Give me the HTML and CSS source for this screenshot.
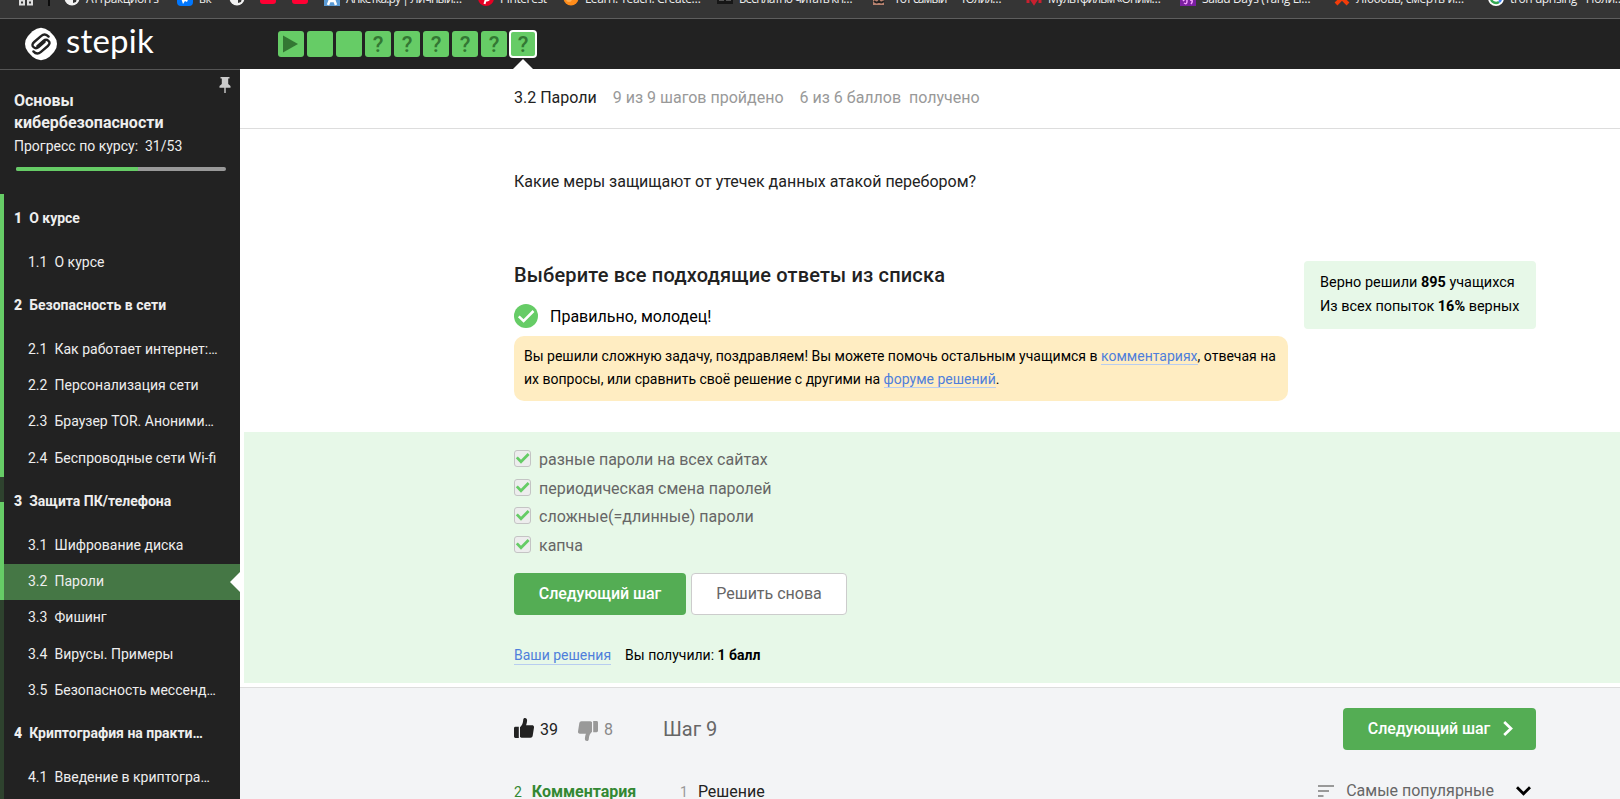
FILE: index.html
```html
<!DOCTYPE html>
<html lang="ru">
<head>
<meta charset="utf-8">
<title>Пароли — Stepik</title>
<link rel="stylesheet" href="styles.css">
</head>
<body>
<svg class="defs" aria-hidden="true">
  <symbol id="check" viewBox="0 0 17 17"><path d="M2.800 7.400 7 11.800 14.600 4" fill="none" stroke="#66cc66" stroke-width="2.800"/></symbol>
  <symbol id="globe" viewBox="0 0 16 16"><circle cx="8" cy="8" r="7.5" fill="#f2f2f2"/><path d="M4 3l4 1 1 4-3 2-1-2-3-1zM9 10l4-2-1 4-3 1z" fill="#333"/></symbol>
  <symbol id="thumb" viewBox="0 0 20 20"><path d="M0 10.2Q0 8.8 1.4 8.8H4.8V20H1.4Q0 20 0 18.6ZM6 9.3C8 7.5 9 5.2 9.2 2 9.3.6 10 0 11 0c1.400 0 2.100 1 2.100 2.300 0 1.800-.5 3.400-1 4.900H18.200c1.200 0 2 1 1.800 2.200L18.700 17.800c-.2 1.300-1 2-2.200 2H7.500L6 19Z"/></symbol>
</svg>

<div class="bookmarks">
  <span class="mark mark-apps"><svg class="fav" viewBox="0 0 16 16"><path d="M2 3h4v4H2zM10 3h4v4h-4zM2 10.500h4v4H2zM10 10.500h4v4h-4z" fill="none" stroke="#ddd" stroke-width="2"/></svg></span>
  <span class="mark-divider"></span>
  <span class="mark w112"><svg class="fav"><use href="#globe"/></svg><span>Аттракцион's</span></span>
  <span class="mark w52"><svg class="fav" viewBox="0 0 16 16"><rect width="16" height="16" rx="4" fill="#07f"/><path d="M3 5l5 3 5-3-3 7-2-1-2 3z" fill="#fff"/></svg><span>вк</span></span>
  <span class="mark w31"><svg class="fav"><use href="#globe"/></svg></span>
  <span class="mark w32"><svg class="fav" viewBox="0 0 16 16"><rect width="16" height="14" rx="3" fill="#ff0033"/></svg></span>
  <span class="mark w32"><svg class="fav" viewBox="0 0 16 16"><rect width="16" height="14" rx="3" fill="#ff0033"/></svg></span>
  <span class="mark w154 tight"><svg class="fav" viewBox="0 0 16 16"><rect width="16" height="16" fill="#5b9bd5"/><path d="M4 15 8 4l4 11M5 11h6" fill="none" stroke="#fff" stroke-width="2.500"/></svg><span>Анкетка.ру | Личный…</span></span>
  <span class="mark w85"><svg class="fav" viewBox="0 0 16 16"><circle cx="8" cy="8" r="8" fill="#e60023"/><path d="M6.500 14 9 5" stroke="#fff" stroke-width="2"/><path d="M7.500 10.500q4 1 4-3" fill="none" stroke="#fff" stroke-width="1.500"/></svg><span>Pinterest</span></span>
  <span class="mark w154"><svg class="fav" viewBox="0 0 16 16"><circle cx="8" cy="8" r="7.500" fill="#ff8c1a"/><circle cx="6" cy="9" r="3" fill="#ffb055"/></svg><span>Learn. Teach. Create…</span></span>
  <span class="mark w155 tight"><svg class="fav" viewBox="0 0 16 16"><rect width="16" height="14" fill="#161616"/><path d="M2 10h5M9 10h5" stroke="#555" stroke-width="2"/></svg><span>Бесплатно читать кн…</span></span>
  <span class="mark w154 tight"><svg class="fav" viewBox="0 0 16 16"><rect x="1" width="11" height="15" fill="#b98370"/><path d="M2 11q3 3 5 0 2 3 5 0" fill="none" stroke="#222" stroke-width="2"/></svg><span>Тот самый — Юлия…</span></span>
  <span class="mark w154 tight"><svg class="fav" viewBox="0 0 16 16"><path d="M2 13V4l6 9 6-9v9" fill="none" stroke="#c8202f" stroke-width="3"/></svg><span>Мультфильм «Оним…</span></span>
  <span class="mark w154"><svg class="fav" viewBox="0 0 16 16"><rect width="16" height="16" fill="#7b1fa2"/><path d="M3 11q4-4 4 0t-3 2M10 10q4 0 1 4" fill="none" stroke="#f6a0ff" stroke-width="1.500"/></svg><span>Salad Days (Tang Li…</span></span>
  <span class="mark w154"><svg class="fav" viewBox="0 0 16 16"><path d="M2 2 14 14M14 2 2 14" stroke="#f23c0a" stroke-width="4"/></svg><span>Любовь, смерть и…</span></span>
  <span class="mark w154"><svg class="fav" viewBox="0 0 16 16"><circle cx="8" cy="8" r="8" fill="#fff"/><path d="M3 8a5 5 0 0 0 8 4" fill="none" stroke="#34a853" stroke-width="2.500"/><path d="M11 12a5 5 0 0 0 2-4H8" fill="none" stroke="#4285f4" stroke-width="2.500"/></svg><span>tron uprising - Поли…</span></span>
</div>

<header class="topbar">
  <a class="brand">
    <svg class="brand-mark" viewBox="0 0 34 34"><path d="M8.500 4.200Q17-2.800 25.500 4.200L30 9q3 3.500 3 8t-3 8l-4.500 4.800q-8.500 7-17 0L4 25q-3-3.500-3-8t3-8Z" fill="#fff"/><path d="M24.600 9.600Q21 5.600 17 9.200L10.200 15q-3.200 3-.6 5.200 2.400 2 5-.200l6-5.200" fill="none" stroke="#222" stroke-width="2.400" stroke-linecap="round"/><path d="M9.400 24.400q3.600 4 7.600 .4l6.800-5.800q3.200-3 .6-5.200-2.400-2-5 .200l-6 5.200" fill="none" stroke="#222" stroke-width="2.400" stroke-linecap="round"/></svg>
    <span class="brand-name">stepik</span>
  </a>
  <nav class="steps">
    <a class="step"><svg class="play" viewBox="0 0 16 18"><path d="M0 0 16 9 0 18Z" fill="#337733"/></svg></a>
    <a class="step"></a>
    <a class="step"></a>
    <a class="step">?</a>
    <a class="step">?</a>
    <a class="step">?</a>
    <a class="step">?</a>
    <a class="step">?</a>
    <a class="step step-current">?</a>
  </nav>
</header>

<div class="layout">
  <aside class="sidebar">
    <div class="course">
      <svg class="pin" viewBox="0 0 12 17"><path d="M1.500 0h9v1.500H9.200V7l2.300 2v1.800H6.700V16H5.300v-5.200H.5V9l2.300-2V1.500H1.500Z" fill="#ccc"/></svg>
      <h2 class="course-title">Основы кибербезопасности</h2>
      <p class="course-progress">Прогресс по курсу:&nbsp; 31/53</p>
      <div class="meter"><div class="meter-fill" style="width:58%"></div></div>
    </div>
    <ul class="toc">
      <li class="section done"><b>1</b><span>О курсе</span></li>
      <li class="lesson done"><i>1.1</i><span>О курсе</span></li>
      <li class="section done"><b>2</b><span>Безопасность в сети</span></li>
      <li class="lesson done"><i>2.1</i><span>Как работает интернет:…</span></li>
      <li class="lesson done"><i>2.2</i><span>Персонализация сети</span></li>
      <li class="lesson done"><i>2.3</i><span>Браузер TOR. Аноними…</span></li>
      <li class="lesson done"><i>2.4</i><span>Беспроводные сети Wi-fi</span></li>
      <li class="section half"><b>3</b><span>Защита ПК/телефона</span></li>
      <li class="lesson done"><i>3.1</i><span>Шифрование диска</span></li>
      <li class="lesson done current"><i>3.2</i><span>Пароли</span></li>
      <li class="lesson"><i>3.3</i><span>Фишинг</span></li>
      <li class="lesson"><i>3.4</i><span>Вирусы. Примеры</span></li>
      <li class="lesson"><i>3.5</i><span>Безопасность мессенд…</span></li>
      <li class="section"><b>4</b><span>Криптография на практи…</span></li>
      <li class="lesson"><i>4.1</i><span>Введение в криптогра…</span></li>
      <li class="lesson"></li>
    </ul>
  </aside>

  <main class="main">
    <div class="lesson-head">
      <span class="lesson-name">3.2 Пароли</span>
      <span>9 из 9 шагов пройдено</span>
      <span>6 из 6 баллов&nbsp; получено</span>
    </div>
    <p class="question">Какие меры защищают от утечек данных атакой перебором?</p>
    <section class="quiz">
      <div class="quiz-body">
        <h1 class="quiz-title">Выберите все подходящие ответы из списка</h1>
        <div class="verdict">
          <svg class="verdict-icon" viewBox="0 0 24 24"><circle cx="12" cy="12" r="12" fill="#66cc66"/><path d="M4.800 12.300 9.600 17 19.500 7" fill="none" stroke="#fff" stroke-width="2.500"/></svg>
          <span>Правильно, молодец!</span>
        </div>
        <div class="hint">Вы решили сложную задачу, поздравляем! Вы можете помочь остальным учащимся в <a class="link">комментариях</a>, отвечая на<br>их вопросы, или сравнить своё решение с другими на <a class="link">форуме решений</a>.</div>
      </div>
      <aside class="stats">
        <div>Верно решили <b>895</b> учащихся</div>
        <div>Из всех попыток <b>16%</b> верных</div>
      </aside>
    </section>

    <section class="answer">
      <div class="options">
        <div class="option"><span class="box"><svg><use href="#check"/></svg></span><span>разные пароли на всех сайтах</span></div>
        <div class="option"><span class="box"><svg><use href="#check"/></svg></span><span>периодическая смена паролей</span></div>
        <div class="option"><span class="box"><svg><use href="#check"/></svg></span><span>сложные(=длинные) пароли</span></div>
        <div class="option"><span class="box"><svg><use href="#check"/></svg></span><span>капча</span></div>
      </div>
      <div class="actions">
        <a class="btn btn-primary">Следующий шаг</a>
        <a class="btn btn-plain">Решить снова</a>
      </div>
      <div class="result"><a class="link">Ваши решения</a><span>Вы получили: <b>1 балл</b></span></div>
    </section>

    <footer class="footer">
      <div class="footer-row">
        <span class="vote"><svg class="thumb"><use href="#thumb"/></svg>39</span>
        <span class="vote vote-down"><svg class="thumb thumb-down"><use href="#thumb"/></svg>8</span>
        <span class="step-label">Шаг 9</span>
        <a class="btn btn-primary btn-next">Следующий шаг<svg class="next-icon" viewBox="0 0 10 15"><path d="M1.200 1 8 7.500 1.200 14" fill="none" stroke="#fff" stroke-width="2.700"/></svg></a>
      </div>
      <div class="tabs">
        <span class="tab tab-active"><small>2</small>Комментария</span>
        <span class="tab"><small>1</small>Решение</span>
        <span class="sort"><svg class="sort-icon" viewBox="0 0 16 12"><path d="M0 1h16M0 6h11M0 11h5.500" stroke="#999" stroke-width="2"/></svg>Самые популярные<svg class="sort-arrow" viewBox="0 0 15 10"><path d="M1 1.200 7.500 7.800 14 1.200" fill="none" stroke="#000" stroke-width="2.800"/></svg></span>
      </div>
    </footer>
  </main>
</div>
</body>
</html>
```

FILE: styles.css
```css
* { box-sizing: border-box; }
body { margin: 0; height: 799px; overflow: hidden; display: flex; flex-direction: column; font-family: Roboto, "Liberation Sans", sans-serif; font-size: 16px; color: #222; background: #fff; }
h1, h2, p, ul { margin: 0; padding: 0; }
svg { display: block; flex: none; }
.defs { display: none; }

.bookmarks { height: 19px; flex: none; overflow: hidden; display: flex; align-items: flex-start; background: #353535; border-bottom: 1px solid #5e5e5e; color: #eee; font: 12px/18px "Open Sans", "Noto Sans", sans-serif; letter-spacing: -.4px; padding-left: 18px; white-space: nowrap; }
.mark { display: flex; gap: 6px; flex: none; margin-top: -10px; }
.mark-apps { width: 30px; }
.mark-divider { width: 2px; height: 6px; margin-right: 14px; background: #0c0c0c; flex: none; }
.fav { width: 16px; height: 16px; }
.tight { letter-spacing: -.9px; }
.w31 { width: 31px; } .w32 { width: 32px; } .w52 { width: 52px; } .w85 { width: 85px; }
.w112 { width: 113px; } .w154 { width: 154px; } .w155 { width: 155px; }

.topbar { height: 50px; flex: none; display: flex; align-items: flex-start; background: #222; }
.brand { width: 278px; display: flex; padding: 8px 0 0 24px; }
.brand-mark { width: 34px; height: 34px; }
.brand-name { margin-left: 8px; font: 33px/34px Lato, sans-serif; color: #fff; margin-top: -4px; letter-spacing: .2px; }
.steps { display: flex; gap: 3px; padding-top: 12px; }
.step { width: 26px; height: 26px; border-radius: 3px; background: #66cc66; color: #337733; font-size: 22px; font-weight: 500; line-height: 27px; text-align: center; display: flex; justify-content: center; }
.play { width: 15px; height: 18px; margin-top: 4px; margin-left: -1px; }
.step-current { position: relative; box-shadow: 0 0 0 2px #fff; width: 24px; height: 24px; margin: 1px; line-height: 25px; border-radius: 2px; }
.step-current::after { content: ""; position: absolute; top: 27px; left: 2px; border: 10px solid transparent; border-top: 0; border-bottom-color: #fff; }

.layout { flex: 1; min-height: 0; display: flex; }
.sidebar { width: 240px; flex: none; background: #222; color: #eee; border-top: 1px solid #555; overflow: hidden; }
.course { height: 124px; padding: 20px 14px 0; position: relative; }
.pin { position: absolute; left: 219px; top: 7px; width: 12px; height: 17px; }
.course-title { font-size: 16px; line-height: 22px; font-weight: 700; }
.course-progress { font-size: 14px; line-height: 20px; margin-top: 2px; }
.meter { height: 4px; margin: 11px 0 0 2px; background: #999; border-radius: 2px; overflow: hidden; }
.meter-fill { height: 4px; background: #66cc66; }
.toc { list-style: none; font-size: 14px; }
.section, .lesson { display: flex; align-items: center; border-left: 4px solid #2e422e; white-space: nowrap; }
.section { height: 50.400px; padding: 0 0 2px 10px; gap: 7px; font-weight: 700; }
.lesson { height: 36.400px; padding: 0 0 1.600px 24px; gap: 7px; }
.lesson i { font-style: normal; width: 19.500px; }
.done { border-left-color: #66cc66; }
.half { border-left: 0; padding-left: 14px; background: linear-gradient(#2e422e 50%, #66cc66 50%) 0 0 / 4px 100% no-repeat; }
.current { background: #457745; position: relative; }
.current::after { content: ""; position: absolute; right: 0; top: 8px; border: 10px solid transparent; border-left: 0; border-right-color: #fff; }

.main { flex: 1; display: flex; flex-direction: column; background: #fff; }
.lesson-head { height: 60px; flex: none; display: flex; gap: 16px; padding: 0 0 3px 274px; align-items: center; color: #999; border-bottom: 1px solid #ddd; }
.lesson-name { color: #222; }
.question { padding-left: 274px; margin-top: 41px; line-height: 24px; height: 91px; flex: none; }
.quiz { height: 171px; flex: none; display: flex; padding: 0 84px 0 274px; justify-content: space-between; align-items: flex-start; }
.quiz-body { width: 774px; }
.quiz-title { font-size: 20px; line-height: 28px; font-weight: 500; letter-spacing: .16px; }
.verdict { display: flex; gap: 12px; height: 24px; align-items: center; margin: 15px 0 8px; color: #000; }
.verdict-icon { width: 24px; height: 24px; }
.hint { height: 65px; padding: 9px 10px; background: #ffedc2; border-radius: 10px; font-size: 14px; line-height: 23px; color: #000; white-space: nowrap; letter-spacing: .005px; }
.link { color: #4f7fdb; border-bottom: 1px solid #b8cdf0; }
.stats { width: 232px; height: 68px; padding: 10px 16px; background: #e7f8e8; border-radius: 4px; font-size: 14.450px; line-height: 24px; color: #000; white-space: nowrap; }

.answer { height: 251px; flex: none; margin-left: 4px; padding: 13px 0 0 270px; background: #e7f8e8; }
.option { height: 28.600px; display: flex; gap: 8px; align-items: center; color: #666; }
.option:nth-child(2) { padding-top: 1px; }
.box { width: 17px; height: 17px; border: 1px solid #c4c4c4; border-radius: 3px; background: #ededed; margin-top: -2px; }
.box svg { width: 17px; height: 17px; margin: -1px; }
.actions { display: flex; gap: 5px; margin-top: 14px; }
.btn { height: 42px; border-radius: 4px; display: flex; align-items: center; justify-content: center; font-size: 16px; padding-bottom: 2px; }
.btn-primary { width: 172px; background: #54ad54; color: #fff; font-weight: 500; letter-spacing: -.08px; }
.btn-plain { width: 156px; background: #fff; border: 1px solid #ccc; color: #666; }
.result { display: flex; gap: 14px; margin-top: 31px; font-size: 14px; line-height: 18px; color: #000; }

.footer { flex: 1; margin-top: 4px; padding: 20px 84px 0 274px; background: #f3f4f6; border-top: 1px solid #ddd; }
.footer-row { height: 42px; display: flex; align-items: center; }
.vote { display: flex; width: 64px; gap: 6px; align-items: center; }
.vote-down { width: 85px; color: #888; }
.thumb { width: 20px; height: 20px; fill: #222; margin-top: -2px; }
.thumb-down { fill: #999; transform: rotate(180deg); margin-top: 4px; }
.step-label { font-size: 20px; color: #666; flex: 1; }
.btn-next { width: 193px; gap: 13px; padding-left: 2px; }
.next-icon { width: 10px; height: 15px; margin-top: 1px; }
.tabs { display: flex; align-items: baseline; margin-top: 30px; line-height: 20px; }
.tab small { font-size: 14px; color: #999; margin-right: 10px; }
.tab-active, .tab-active small { color: #338833; }
.tab-active { width: 166px; font-weight: 700; letter-spacing: -.05px; }
.tab-active small { font-weight: 400; }
.sort { margin-left: auto; display: flex; align-items: center; color: #666; padding: 1px 5px 0 0; }
.sort-icon { width: 16px; height: 12px; margin-right: 12px; }
.sort-arrow { width: 15px; height: 10px; margin-left: 22px; }
```
